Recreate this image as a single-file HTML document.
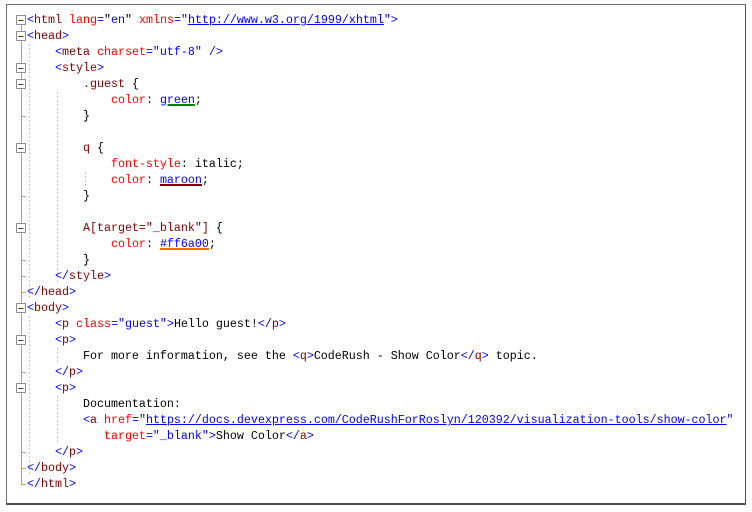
<!DOCTYPE html>
<html><head><meta charset="utf-8"><style>
body{margin:0;width:752px;height:512px;background:#fff;position:relative;overflow:hidden}
#frame{position:absolute;left:6px;top:4px;width:738px;height:498px;border:1px solid #707070;border-right-color:#505050;border-bottom:2px solid #505050}
.l{position:absolute;left:27px;height:16px;line-height:16px;font-family:"Liberation Mono",monospace;font-size:11.67px;white-space:pre;color:#000}
.b{color:#0000ff}.n{color:#800000}.a{color:#ff0000}.v{color:#0000ff}.u{color:#0000ff;text-decoration:underline}
.ug{text-decoration:underline;text-decoration-color:#008000;text-decoration-thickness:2px;color:#0000ff}
.um{text-decoration:underline;text-decoration-color:#800000;text-decoration-thickness:2px;color:#0000ff}
.uo{text-decoration:underline;text-decoration-color:#ff6a00;text-decoration-thickness:2px;color:#0000ff}
svg{position:absolute;left:0;top:0}
</style></head><body>
<div id="frame"></div>
<svg width="752" height="512">
<g stroke="#a0a0a0" stroke-width="1" fill="none">
<path d="M21.5 25V484.5H26M21.5 41V292.5H26M21.5 73V276.5H26M21.5 89V116.5H26M21.5 153V196.5H26M21.5 233V260.5H26M21.5 313V468.5H26M21.5 345V372.5H26M21.5 393V452.5H26"/>
</g>
<g stroke="#c8c8c8" stroke-dasharray="2,2" fill="none">
<path d="M29.5 44V300M29.5 316V476M57.5 92V284M57.5 348V364M57.5 396V444M85.5 108V124M85.5 172V188M85.5 252V268"/>
</g>
<g fill="#fff" stroke="#909090">
<rect x="16.5" y="15.5" width="9" height="9"/><rect x="16.5" y="31.5" width="9" height="9"/><rect x="16.5" y="63.5" width="9" height="9"/><rect x="16.5" y="79.5" width="9" height="9"/><rect x="16.5" y="143.5" width="9" height="9"/><rect x="16.5" y="223.5" width="9" height="9"/><rect x="16.5" y="303.5" width="9" height="9"/><rect x="16.5" y="335.5" width="9" height="9"/><rect x="16.5" y="383.5" width="9" height="9"/>
</g>
<g stroke="#404040"><path d="M18.5 20.5h5M18.5 36.5h5M18.5 68.5h5M18.5 84.5h5M18.5 148.5h5M18.5 228.5h5M18.5 308.5h5M18.5 340.5h5M18.5 388.5h5"/></g>
</svg>
<div class="l" style="top:12px"><span class="b">&lt;</span><span class="n">html</span> <span class="a">lang</span><span class="b">=</span>"<span class="v">en</span>" <span class="a">xmlns</span><span class="b">=</span><span class="b">"</span><span class="u">http://www.w3.org/1999/xhtml</span><span class="b">"&gt;</span></div>
<div class="l" style="top:28px"><span class="b">&lt;</span><span class="n">head</span><span class="b">&gt;</span></div>
<div class="l" style="top:44px">    <span class="b">&lt;</span><span class="n">meta</span> <span class="a">charset</span><span class="b">="utf-8" /&gt;</span></div>
<div class="l" style="top:60px">    <span class="b">&lt;</span><span class="n">style</span><span class="b">&gt;</span></div>
<div class="l" style="top:76px">        <span class="n">.guest</span> {</div>
<div class="l" style="top:92px">            <span class="a">color</span>: <span class="ug">green</span>;</div>
<div class="l" style="top:108px">        }</div>
<div class="l" style="top:140px">        <span class="n">q</span> {</div>
<div class="l" style="top:156px">            <span class="a">font-style</span>: italic;</div>
<div class="l" style="top:172px">            <span class="a">color</span>: <span class="um">maroon</span>;</div>
<div class="l" style="top:188px">        }</div>
<div class="l" style="top:220px">        <span class="n">A[target="_blank"]</span> {</div>
<div class="l" style="top:236px">            <span class="a">color</span>: <span class="uo">#ff6a00</span>;</div>
<div class="l" style="top:252px">        }</div>
<div class="l" style="top:268px">    <span class="b">&lt;/</span><span class="n">style</span><span class="b">&gt;</span></div>
<div class="l" style="top:284px"><span class="b">&lt;/</span><span class="n">head</span><span class="b">&gt;</span></div>
<div class="l" style="top:300px"><span class="b">&lt;</span><span class="n">body</span><span class="b">&gt;</span></div>
<div class="l" style="top:316px">    <span class="b">&lt;</span><span class="n">p</span> <span class="a">class</span><span class="b">="guest"&gt;</span>Hello guest!<span class="b">&lt;/</span><span class="n">p</span><span class="b">&gt;</span></div>
<div class="l" style="top:332px">    <span class="b">&lt;</span><span class="n">p</span><span class="b">&gt;</span></div>
<div class="l" style="top:348px">        For more information, see the <span class="b">&lt;</span><span class="n">q</span><span class="b">&gt;</span>CodeRush - Show Color<span class="b">&lt;/</span><span class="n">q</span><span class="b">&gt;</span> topic.</div>
<div class="l" style="top:364px">    <span class="b">&lt;/</span><span class="n">p</span><span class="b">&gt;</span></div>
<div class="l" style="top:380px">    <span class="b">&lt;</span><span class="n">p</span><span class="b">&gt;</span></div>
<div class="l" style="top:396px">        Documentation:</div>
<div class="l" style="top:412px">        <span class="b">&lt;</span><span class="n">a</span> <span class="a">href</span><span class="b">="</span><span class="u">https://docs.devexpress.com/CodeRushForRoslyn/120392/visualization-tools/show-color</span><span class="b">"</span></div>
<div class="l" style="top:428px">           <span class="a">target</span><span class="b">="_blank"&gt;</span>Show Color<span class="b">&lt;/</span><span class="n">a</span><span class="b">&gt;</span></div>
<div class="l" style="top:444px">    <span class="b">&lt;/</span><span class="n">p</span><span class="b">&gt;</span></div>
<div class="l" style="top:460px"><span class="b">&lt;/</span><span class="n">body</span><span class="b">&gt;</span></div>
<div class="l" style="top:476px"><span class="b">&lt;/</span><span class="n">html</span><span class="b">&gt;</span></div>
</body></html>
